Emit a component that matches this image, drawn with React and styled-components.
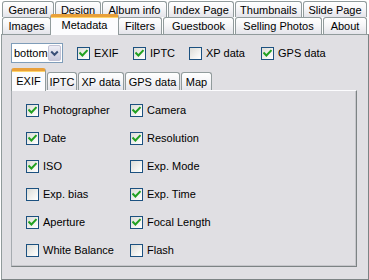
import React from "react";
import styled, { createGlobalStyle, css } from "styled-components";

const Global = createGlobalStyle`
  html, body { margin: 0; padding: 0; background: #ffffff; }
  body {
    width: 369px; height: 280px; overflow: hidden;
    font-family: "Liberation Sans", Arial, sans-serif;
    font-size: 11px; color: #000;
  }
  * { box-sizing: border-box; }
`;

const Root = styled.div`
  width: 369px;
  height: 280px;
  padding-top: 1px;
  display: flex;
  flex-direction: column;
`;

const TabRow = styled.div`
  display: flex;
  align-items: flex-end;
  gap: 1px;
  padding-left: 2px;
  height: ${(p) => p.$h}px;
  position: relative;
  z-index: ${(p) => p.$z || 1};
`;

const tabBase = css`
  flex: 0 0 auto;
  display: flex;
  align-items: center;
  justify-content: center;
  border: 1px solid #919b9c;
  border-bottom: none;
  border-radius: 3px 3px 0 0;
  white-space: nowrap;
  line-height: 13px;
`;

const Tab = styled.div`
  ${tabBase};
  width: ${(p) => p.$w}px;
  height: ${(p) => p.$h}px;
  padding-top: 1px;
  background: linear-gradient(#ffffff 0%, #f6f6f8 45%, #e4e4ea 100%);
  ${(p) =>
    p.$sel &&
    css`
      position: relative;
      z-index: 3;
      margin: 0 -2px -1px -2px;
      width: ${p.$w + 4}px;
      height: ${p.$h + 4}px;
      padding-top: 0;
      padding-bottom: 2px;
      background: #fcfcfe;
      border-top: 3px solid #f7b843;
      border-color: #e9a03a #919b9c #919b9c #919b9c;
      box-shadow: inset 0 1px 0 #ffd46a;
    `}
`;

const Panel = styled.div`
  margin-left: 1px;
  width: 368px;
  height: 246px;
  border: 1px solid #919b9c;
  border-right-color: #7c8384;
  border-bottom-color: #7c8384;
  background: #e0dfe3;
  padding: 8px 0 0 9px;
  display: flex;
  flex-direction: column;
`;

const Toolbar = styled.div`
  display: flex;
  align-items: center;
  height: 20px;
`;

const Select = styled.div`
  width: 52px;
  height: 20px;
  border: 1px solid #7f9db9;
  background: #fff;
  display: flex;
  align-items: center;
  padding: 1px;
  margin-right: 14px;
`;

const SelectText = styled.span`
  flex: 1;
  padding-left: 1px;
  line-height: 16px;
`;

const DropBtn = styled.div`
  width: 16px;
  height: 16px;
  border: 1px solid #c3c3d6;
  border-radius: 2px;
  background: linear-gradient(#eeeef6, #c9c9dc);
  display: flex;
  align-items: center;
  justify-content: center;
`;

const CheckGroup = styled.label`
  display: flex;
  align-items: center;
  gap: 4px;
  width: ${(p) => (p.$w ? `${p.$w}px` : "auto")};
  flex: 0 0 auto;
  white-space: nowrap;
`;

const Box = styled.span`
  width: 13px;
  height: 13px;
  border: 1px solid #1c5180;
  background: linear-gradient(135deg, #dcdcd7 0%, #f6f6f4 70%, #ffffff 100%);
  display: inline-flex;
  align-items: center;
  justify-content: center;
  flex: 0 0 auto;
`;

const SubTabRow = styled.div`
  display: flex;
  align-items: flex-end;
  gap: 1px;
  height: 20px;
  margin-top: 7px;
  position: relative;
  z-index: 2;
`;

const SubTab = styled.div`
  ${tabBase};
  width: ${(p) => p.$w}px;
  height: 18px;
  padding-top: 1px;
  background: linear-gradient(#ffffff 0%, #f6f6f8 45%, #e4e4ea 100%);
  ${(p) =>
    p.$sel &&
    css`
      position: relative;
      z-index: 3;
      height: 23px;
      margin-bottom: -1px;
      padding-top: 0;
      background: #fcfcfe;
      border-top: 3px solid #f7b843;
      border-color: #e9a03a #919b9c #919b9c #919b9c;
      box-shadow: inset 0 1px 0 #ffd46a;
    `}
`;

const Inner = styled.div`
  width: 346px;
  height: 177px;
  background: #e0dfe3;
  border: 1px solid #919b9c;
  border-top-color: #fcfcfe;
  border-left-color: #a6abb0;
  border-right-color: #7c8384;
  border-bottom-color: #7c8384;
  box-shadow: inset -1px -1px 0 #c6c6cb;
  padding: 5px 0 0 14px;
`;

const Grid = styled.div`
  display: grid;
  grid-template-columns: 104px auto;
  grid-auto-rows: 28px;
  align-items: center;
`;

const Check = ({ on }) => (
  <Box>
    {on && (
      <svg width="9" height="9" viewBox="0 0 9 9">
        <polyline
          points="1.2,4.2 3.4,6.5 7.8,1.8"
          fill="none"
          stroke="#21a121"
          strokeWidth="2"
          strokeLinecap="square"
        />
      </svg>
    )}
  </Box>
);

const CheckItem = ({ on, label, w }) => (
  <CheckGroup $w={w}>
    <Check on={on} />
    <span>{label}</span>
  </CheckGroup>
);

const row1 = [
  ["General", 52],
  ["Design", 46],
  ["Album info", 65],
  ["Index Page", 66],
  ["Thumbnails", 67],
  ["Slide Page", 64],
];
const row2 = [
  ["Images", 49],
  ["Metadata", 65, true],
  ["Filters", 44],
  ["Guestbook", 71],
  ["Selling Photos", 87],
  ["About", 44],
];
const subs = [
  ["EXIF", 35, true],
  ["IPTC", 30],
  ["XP data", 46],
  ["GPS data", 55],
  ["Map", 31],
];
const items = [
  ["Photographer", true],
  ["Camera", true],
  ["Date", true],
  ["Resolution", true],
  ["ISO", true],
  ["Exp. Mode", false],
  ["Exp. bias", false],
  ["Exp. Time", true],
  ["Aperture", true],
  ["Focal Length", true],
  ["White Balance", false],
  ["Flash", false],
];

export default function App() {
  return (
    <Root>
      <Global />
      <TabRow $h={16} $z={1}>
        {row1.map(([t, w]) => (
          <Tab key={t} $w={w} $h={16}>
            {t}
          </Tab>
        ))}
      </TabRow>
      <TabRow $h={17} $z={2}>
        {row2.map(([t, w, s]) => (
          <Tab key={t} $w={w} $h={17} $sel={s}>
            {t}
          </Tab>
        ))}
      </TabRow>
      <Panel>
        <Toolbar>
          <Select>
            <SelectText>bottom</SelectText>
            <DropBtn>
              <svg width="9" height="7" viewBox="0 0 9 7">
                <polyline
                  points="1.2,1.5 4.5,4.8 7.8,1.5"
                  fill="none"
                  stroke="#3a4f78"
                  strokeWidth="2"
                />
              </svg>
            </DropBtn>
          </Select>
          <CheckItem on label="EXIF" w={56} />
          <CheckItem on label="IPTC" w={56} />
          <CheckItem on={false} label="XP data" w={72} />
          <CheckItem on label="GPS data" />
        </Toolbar>
        <SubTabRow>
          {subs.map(([t, w, s]) => (
            <SubTab key={t} $w={w} $sel={s}>
              {t}
            </SubTab>
          ))}
        </SubTabRow>
        <Inner>
          <Grid>
            {items.map(([t, on]) => (
              <CheckItem key={t} on={on} label={t} />
            ))}
          </Grid>
        </Inner>
      </Panel>
    </Root>
  );
}
